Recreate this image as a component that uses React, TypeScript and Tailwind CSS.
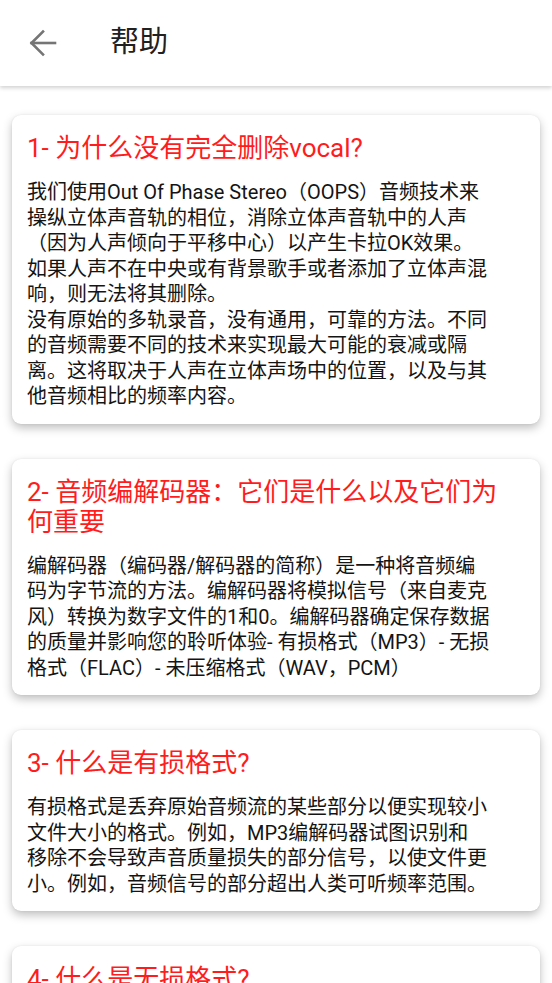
import React from 'react';

interface HelpCardProps {
  title: string[];
  lines: string[];
}

const HelpCard: React.FC<HelpCardProps> = ({ title, lines }) => {
  return (
    <div className="bg-white rounded-[9px] shadow-[0_4px_10px_rgba(0,0,0,0.25),0_0_2px_rgba(0,0,0,0.08)] px-[15px] pt-[18px] pb-[14px]">
      {/* Question */}
      <h2 className="text-[26px] leading-[30px] text-[#ff1c1c] font-normal">
        {title.map((t) => (
          <span key={t} className="block whitespace-pre">{t}</span>
        ))}
      </h2>
      {/* Answer */}
      <p className="mt-[17px] text-[20px] leading-[25.5px] text-[#141414]">
        {lines.map((l) => (
          <span key={l} className="block whitespace-pre">{l}</span>
        ))}
      </p>
    </div>
  );
};

const App = () => {
  const items = [
    {
      id: "vocal",
      title: ["1- 为什么没有完全删除vocal?"],
      lines: [
        "我们使用Out Of Phase Stereo（OOPS）音频技术来",
        "操纵立体声音轨的相位，消除立体声音轨中的人声",
        "（因为人声倾向于平移中心）以产生卡拉OK效果。",
        "如果人声不在中央或有背景歌手或者添加了立体声混",
        "响，则无法将其删除。",
        "没有原始的多轨录音，没有通用，可靠的方法。不同",
        "的音频需要不同的技术来实现最大可能的衰减或隔",
        "离。这将取决于人声在立体声场中的位置，以及与其",
        "他音频相比的频率内容。",
      ],
    },
    {
      id: "codec",
      title: ["2- 音频编解码器：它们是什么以及它们为", "何重要"],
      lines: [
        "编解码器（编码器/解码器的简称）是一种将音频编",
        "码为字节流的方法。编解码器将模拟信号（来自麦克",
        "风）转换为数字文件的1和0。编解码器确定保存数据",
        "的质量并影响您的聆听体验- 有损格式（MP3）- 无损",
        "格式（FLAC）- 未压缩格式（WAV，PCM）",
      ],
    },
    {
      id: "lossy",
      title: ["3- 什么是有损格式?"],
      lines: [
        "有损格式是丢弃原始音频流的某些部分以便实现较小",
        "文件大小的格式。例如，MP3编解码器试图识别和",
        "移除不会导致声音质量损失的部分信号，以使文件更",
        "小。例如，音频信号的部分超出人类可听频率范围。",
      ],
    },
    {
      id: "lossless",
      title: ["4- 什么是无损格式?"],
      lines: [
        "无损格式保留原始音频流的全部数据，",
        "解码后可以完整还原原始音频。",
      ],
    },
  ];

  return (
    <div
      className="w-[552px] h-[983px] overflow-hidden bg-white"
      style={{ fontFamily: "Roboto, 'Noto Sans CJK SC', sans-serif" }}
    >
      {/* App bar */}
      <header className="relative z-10 h-[86px] bg-white flex items-center shadow-[0_2px_4px_rgba(0,0,0,0.18)]">
        <button className="w-[36px] h-[36px] ml-[25px] flex items-center justify-center text-[#757575]">
          <svg width="36" height="36" viewBox="0 0 36 36" fill="none" stroke="currentColor" strokeWidth="2.6" strokeLinecap="square">
            <path d="M6.5 18H30" />
            <path d="M18 6.5L6.5 18L18 29.5" />
          </svg>
        </button>
        <h1 className="ml-[49px] text-[29px] text-[#212121] font-normal">帮助</h1>
      </header>

      {/* Help list */}
      <div className="flex flex-col gap-[35px] px-[12px] pt-[29px] pb-8">
        {items.map((item) => (
          <HelpCard key={item.id} title={item.title} lines={item.lines} />
        ))}
      </div>
    </div>
  );
};

export default App;
